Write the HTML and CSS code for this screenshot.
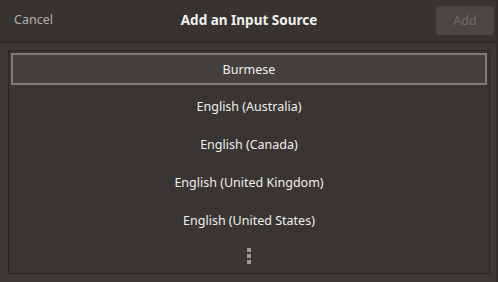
FILE: index.html
```html
<!DOCTYPE html>
<html lang="en">
<head>
    <meta charset="UTF-8">
    <title>Add an Input Source</title>
    <link rel="stylesheet" href="styles.css">
</head>
<body>
    <div class="dialog">
        <div class="header">
            <button class="btn-cancel">Cancel</button>
            <h1>Add an Input Source</h1>
            <button class="btn-add" disabled>Add</button>
        </div>

        <div class="content">
            <ul class="list">
                <li class="row selected">Burmese</li>
                <li class="row">English (Australia)</li>
                <li class="row">English (Canada)</li>
                <li class="row">English (United Kingdom)</li>
                <li class="row">English (United States)</li>
                <li class="row more"><span class="dots"><i></i><i></i><i></i></span></li>
            </ul>
        </div>
    </div>
</body>
</html>
```

FILE: styles.css
```css
body {
    margin: 0;
    padding: 0;
    background-color: #3a3734;
    font-family: 'Noto Sans', sans-serif;
    font-size: 12.5px;
    color: #eeeeec;
    width: 498px;
    height: 282px;
    overflow: hidden;
}
.dialog {
    height: 282px;
    display: flex;
    flex-direction: column;
    border-right: 2px solid #2e2b29;
    box-sizing: border-box;
}
.header {
    height: 43px;
    box-sizing: border-box;
    background: #37332f;
    border-bottom: 1px solid #2a2725;
    border-top-left-radius: 6px;
    display: grid;
    grid-template-columns: 1fr auto 1fr;
    align-items: center;
    padding: 0 2px 3px 6px;
    flex-shrink: 0;
}
.header h1 {
    margin: 0 0 0 -2px;
    font-size: 13.5px;
    font-weight: bold;
    color: #f2f1ef;
}
.btn-cancel {
    justify-self: start;
    background: none;
    border: none;
    font-family: inherit;
    font-size: 12.5px;
    color: #b3b0ac;
    padding: 4px 8px;
}
.btn-add {
    justify-self: end;
    background: #4a4643;
    border: none;
    border-radius: 4px;
    font-family: inherit;
    font-size: 12.5px;
    color: #6f6b67;
    width: 58px;
    height: 29px;
    margin-top: 2px;
}
.content {
    flex: 1;
    padding: 7px 6px 8px 8px;
}
.list {
    list-style: none;
    margin: 0;
    padding: 0;
    height: 100%;
    box-sizing: border-box;
    background: #393532;
    border: 1px solid #292725;
}
.row {
    height: 38px;
    display: flex;
    align-items: center;
    justify-content: center;
    color: #f0efed;
}
.row.selected {
    height: 28px;
    margin: 2px 2px 2px;
    background: #43403e;
    border: 2px solid #7e7b78;
}
.row.more {
    height: 34px;
}
.dots {
    display: flex;
    flex-direction: column;
    gap: 2px;
    margin-left: -1px;
}
.dots i {
    display: block;
    width: 4px;
    height: 4px;
    background: #9b9895;
}
```
